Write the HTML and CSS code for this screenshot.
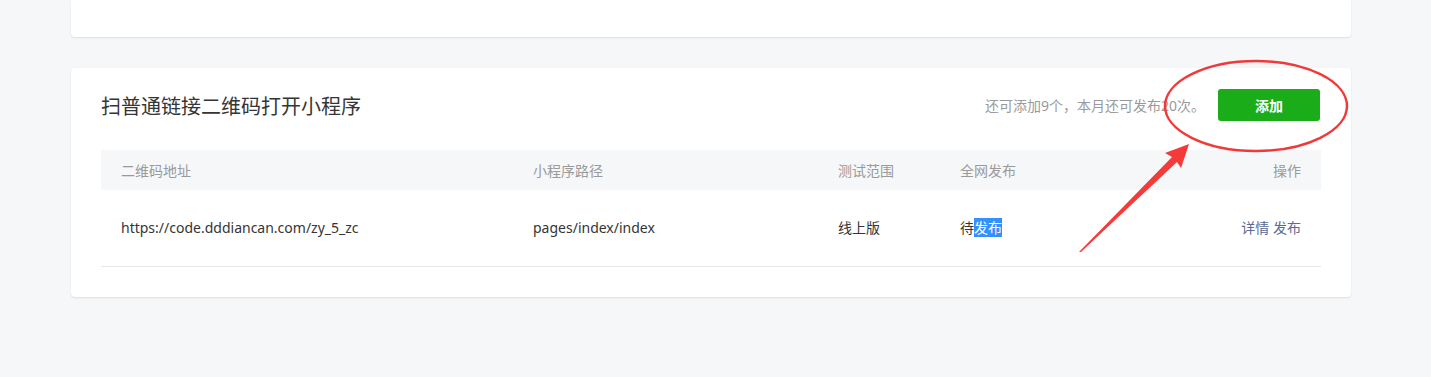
FILE: index.html
```html
<!DOCTYPE html>
<html lang="zh-CN">
<head>
<meta charset="utf-8">
<title>扫普通链接二维码打开小程序</title>
<link rel="stylesheet" href="styles.css">
</head>
<body>
<div class="page">
  <div class="card card-top"></div>
  <div class="card card-main">
    <div class="head">
      <h2 class="title">扫普通链接二维码打开小程序</h2>
      <div class="head-right">
        <span class="quota">还可添加9个，本月还可发布20次。</span>
        <button class="btn-add">添加</button>
      </div>
    </div>
    <div class="table">
      <div class="tr th">
        <div class="cell">二维码地址</div>
        <div class="cell">小程序路径</div>
        <div class="cell">测试范围</div>
        <div class="cell">全网发布</div>
        <div class="cell right">操作</div>
      </div>
      <div class="tr td">
        <div class="cell">https://code.dddiancan.com/zy_5_zc</div>
        <div class="cell">pages/index/index</div>
        <div class="cell">线上版</div>
        <div class="cell">待<span class="sel">发布</span></div>
        <div class="cell right"><a class="link">详情</a> <a class="link">发布</a></div>
      </div>
    </div>
  </div>
</div>
<svg class="annot" width="1431" height="377" viewBox="0 0 1431 377">
  <ellipse cx="1256" cy="106" rx="91" ry="45" fill="none" stroke="#f2393a" stroke-width="2.5"/>
  <polygon fill="#f53a3a" points="1079,252 1172,157 1165,153 1189,144 1181,168 1177,162 1081,252"/>
</svg>
</body>
</html>
```

FILE: styles.css
```css
* { box-sizing: border-box; }
html, body { margin: 0; padding: 0; }
body {
  background: #f6f7f9;
  font-family: "Noto Sans", "Noto Sans CJK SC", sans-serif;
  color: #353535;
  font-size: 14px;
  width: 1431px;
  height: 377px;
  overflow: hidden;
  position: relative;
}
.page {
  padding: 0 80px 0 71px;
}
.card {
  width: 1280px;
  background: #fff;
  border-radius: 4px;
  box-shadow: 0 1px 2px rgba(0, 0, 0, 0.1);
}
.card-top {
  height: 37px;
  border-radius: 0 0 4px 4px;
}
.card-main {
  margin-top: 31px;
  padding: 21px 30px 30px;
}
.head {
  display: flex;
  align-items: center;
  justify-content: space-between;
  height: 32px;
  margin-bottom: 29px;
}
.title {
  margin: 0;
  font-family: "Noto Sans CJK SC", sans-serif;
  font-size: 20px;
  font-weight: 400;
  color: #353535;
}
.head-right {
  display: flex;
  align-items: center;
}
.quota {
  color: #9a9a9a;
  margin-right: 13px;
}
.btn-add {
  width: 102px;
  height: 32px;
  margin-right: 1px;
  border: 0;
  border-radius: 3px;
  background: #1aad19;
  color: #fff;
  font-family: "Noto Sans CJK SC", sans-serif;
  font-size: 14px;
  font-weight: 700;
  padding: 0;
}
.tr {
  display: grid;
  grid-template-columns: 412px 305px 122px 1fr 200px;
  align-items: center;
  padding: 0 20px;
}
.th {
  height: 40px;
  background: #f6f7f9;
  color: #9a9a9a;
}
.td {
  height: 77px;
  border-bottom: 1px solid #e7e7eb;
  padding-bottom: 1px;
}
.cell {
  line-height: 19px;
  white-space: nowrap;
}
.right { text-align: right; }
.sel {
  background: #3390ff;
  color: #fff;
}
.link {
  color: #576b95;
  text-decoration: none;
}
.annot {
  position: absolute;
  left: 0;
  top: 0;
  pointer-events: none;
}
```
